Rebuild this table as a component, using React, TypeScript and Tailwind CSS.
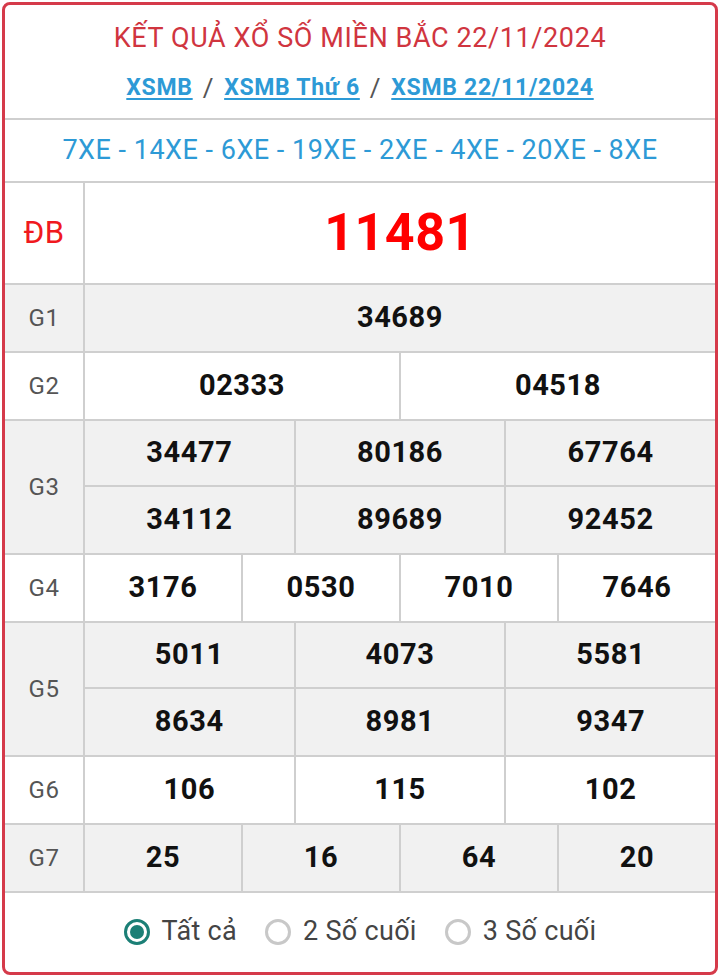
import React from 'react';

const FONT = { fontFamily: 'Roboto, "Noto Sans", Arial, sans-serif' };

type Row = { label: string; rows: string[][]; gray: boolean };

const PRIZES: Row[] = [
  { label: 'G1', rows: [['34689']], gray: true },
  { label: 'G2', rows: [['02333', '04518']], gray: false },
  { label: 'G3', rows: [['34477', '80186', '67764'], ['34112', '89689', '92452']], gray: true },
  { label: 'G4', rows: [['3176', '0530', '7010', '7646']], gray: false },
  { label: 'G5', rows: [['5011', '4073', '5581'], ['8634', '8981', '9347']], gray: true },
  { label: 'G6', rows: [['106', '115', '102']], gray: false },
  { label: 'G7', rows: [['25', '16', '64', '20']], gray: true },
];

function PrizeRow({ p }: { p: Row }) {
  return (
    <div className={`flex border-b-2 border-[#cfcfcf] ${p.gray ? 'bg-[#f1f1f1]' : 'bg-white'}`}>
      <div className="w-[80px] shrink-0 border-r-2 border-[#cfcfcf] flex items-center justify-center text-[24px] tracking-[0.5px] text-[#555]">
        {p.label}
      </div>
      <div className="flex-1 flex flex-col">
        {p.rows.map((r, i) => (
          <div
            key={i}
            className={`flex h-[66px] ${i < p.rows.length - 1 ? 'border-b-2 border-[#cfcfcf]' : ''}`}
          >
            {r.map((n, j) => (
              <div
                key={j}
                className={`flex-1 flex items-center justify-center text-[29px] tracking-[0.6px] font-bold text-[#111] ${j < r.length - 1 ? 'border-r-2 border-[#cfcfcf]' : ''}`}
              >
                {n}
              </div>
            ))}
          </div>
        ))}
      </div>
    </div>
  );
}

function Radio({ label, checked }: { label: string; checked?: boolean }) {
  return (
    <label className="flex items-center gap-[12px]">
      <span
        className={`w-[26px] h-[26px] rounded-full border-[3px] flex items-center justify-center ${checked ? 'border-[#1b7f76]' : 'border-[#c8c8c8]'}`}
      >
        {checked && <span className="w-[14px] h-[14px] rounded-full bg-[#1b7f76]" />}
      </span>
      <span className="text-[27px] tracking-[0.3px] text-[#444]">{label}</span>
    </label>
  );
}

export default function App() {
  return (
    <div className="w-[720px] h-[978px] bg-white p-[2px]" style={FONT}>
      <div className="h-[973px] w-[716px] border-[3px] border-[#d53a4a] rounded-[8px] overflow-hidden flex flex-col">
        <div className="h-[115px] border-b-2 border-[#cfcfcf] flex flex-col items-center">
          <h1 className="mt-[16px] text-[27px] leading-[34px] tracking-[0.6px] text-[#d0353f]">
            KẾT QUẢ XỔ SỐ MIỀN BẮC 22/11/2024
          </h1>
          <div className="mt-[18px] flex items-center gap-[10px] text-[23px] leading-[30px] tracking-[0.7px] font-bold">
            <a className="text-[#2d9ad6] underline underline-offset-[3px]">XSMB</a>
            <span className="text-[#555] font-normal text-[26px]">/</span>
            <a className="text-[#2d9ad6] underline underline-offset-[3px]">XSMB Thứ 6</a>
            <span className="text-[#555] font-normal text-[26px]">/</span>
            <a className="text-[#2d9ad6] underline underline-offset-[3px]">XSMB 22/11/2024</a>
          </div>
        </div>
        <div className="h-[63px] border-b-2 border-[#cfcfcf] flex items-center justify-center text-[27px] tracking-[0.5px] text-[#2d9ad6]">
          7XE - 14XE - 6XE - 19XE - 2XE - 4XE - 20XE - 8XE
        </div>
        <div className="flex h-[102px] border-b-2 border-[#cfcfcf]">
          <div className="w-[80px] shrink-0 border-r-2 border-[#cfcfcf] flex items-center justify-center text-[31px] tracking-[0.5px] text-[#f0191e]">
            ĐB
          </div>
          <div className="flex-1 flex items-center justify-center text-[52px] tracking-[0.5px] font-bold text-[#ff0000]">
            11481
          </div>
        </div>
        {PRIZES.map((p) => (
          <PrizeRow key={p.label} p={p} />
        ))}
        <div className="flex-1 flex items-center justify-center gap-[28px] pb-[2px]">
          <Radio label="Tất cả" checked />
          <Radio label="2 Số cuối" />
          <Radio label="3 Số cuối" />
        </div>
      </div>
    </div>
  );
}
